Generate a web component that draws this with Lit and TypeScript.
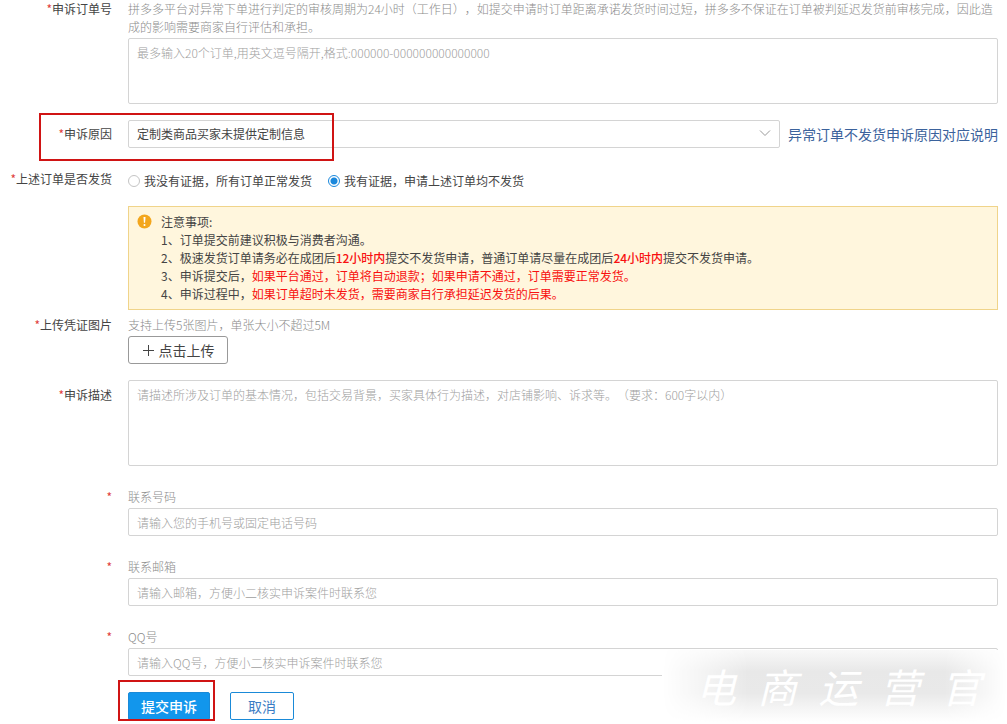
import { LitElement, html, css } from "lit";
import { customElement, state } from "lit/decorators.js";

interface ContactField {
  id: string;
  label: string;
  type: string;
  placeholder: string;
}

const CONTACTS: ContactField[] = [
  { id: "phone", label: "联系号码", type: "tel", placeholder: "请输入您的手机号或固定电话号码" },
  { id: "email", label: "联系邮箱", type: "email", placeholder: "请输入邮箱，方便小二核实申诉案件时联系您" },
  { id: "qq", label: "QQ号", type: "text", placeholder: "请输入QQ号，方便小二核实申诉案件时联系您" },
];

@customElement("app-root")
export class AppRoot extends LitElement {
  static styles = css`
    :host {
      display: block;
      position: relative;
      background: #fff;
      color: #444;
      font-family: "Noto Sans CJK SC", sans-serif;
      font-size: 12px;
      line-height: 18px;
      text-spacing-trim: space-all;
      overflow: hidden;
    }
    * {
      box-sizing: border-box;
    }
    input,
    textarea,
    select,
    button {
      font: inherit;
      color: inherit;
      margin: 0;
      text-spacing-trim: space-all;
    }
    .form {
      display: flex;
      flex-direction: column;
      padding: 0 9px 4px 0;
    }
    .row {
      position: relative;
      display: grid;
      grid-template-columns: 112px minmax(0, 1fr);
      column-gap: 16px;
      margin-bottom: 16px;
    }
    .label {
      text-align: right;
      white-space: nowrap;
    }
    .star {
      color: #e0403c;
    }
    .hint {
      margin: 0;
      color: #8c8c8c;
      font-weight: 300;
    }
    .orders .hint {
      margin-bottom: 2px;
    }
    .box {
      display: block;
      width: 100%;
      height: 28px;
      padding: 4px 8px;
      border: 1px solid #d4d4d4;
      border-radius: 2px;
      background: #fff;
      outline: none;
      resize: none;
    }
    .box::placeholder {
      color: #a0a0a0;
      opacity: 1;
      font-weight: 300;
    }
    .box:focus {
      border-color: #1890e8;
    }
    textarea.box {
      padding-top: 5px;
    }
    .order-box {
      height: 66px;
    }
    .desc-box {
      height: 86px;
    }
    .reason {
      align-items: center;
    }
    .reason-line {
      display: flex;
      align-items: center;
      gap: 8px;
    }
    .picker {
      position: relative;
      flex: 1;
      min-width: 0;
    }
    .picker select {
      appearance: none;
    }
    .chevron {
      position: absolute;
      right: 9px;
      top: 9px;
      pointer-events: none;
    }
    .link {
      color: #3b629c;
      font-size: 14px;
      text-decoration: none;
      white-space: nowrap;
    }
    .ring {
      position: absolute;
      border: 2px solid #d01414;
      pointer-events: none;
    }
    .ring-reason {
      left: 39px;
      top: -7px;
      width: 295px;
      height: 48px;
    }
    .ring-submit {
      left: -10px;
      top: -12px;
      width: 97px;
      height: 41px;
    }
    .shipping {
      padding-top: 6px;
    }
    .radios {
      display: flex;
      gap: 16px;
      padding-top: 2px;
    }
    .radio {
      display: flex;
      align-items: center;
      gap: 4px;
    }
    .radio input {
      appearance: none;
      width: 12px;
      height: 12px;
      border: 1px solid #c4c4c4;
      border-radius: 50%;
      background: #fff;
    }
    .radio input:checked {
      border-color: #1a88dc;
      background: radial-gradient(circle, #1a88dc 3px, #fff 4px);
    }
    .notice {
      display: flex;
      gap: 9px;
      margin-left: 128px;
      margin-bottom: 6px;
      padding: 6px 8px;
      border: 1px solid #f0d48a;
      background: #fff6dd;
    }
    .notice-icon {
      flex: none;
      margin-top: 1px;
    }
    .notice p {
      margin: 0;
    }
    .red {
      color: #f81010;
    }
    b.red {
      font-weight: 500;
    }
    .upload-btn {
      display: flex;
      align-items: center;
      justify-content: center;
      gap: 4px;
      width: 100px;
      height: 28px;
      margin-top: 2px;
      padding: 0;
      border: 1px solid #999;
      border-radius: 3px;
      background: #fff;
      font-size: 14px;
    }
    .desc .label {
      padding-top: 6px;
    }
    .contact {
      margin-top: 6px;
    }
    .contact .hint {
      display: block;
      margin-bottom: 2px;
    }
    .actions {
      position: relative;
      display: flex;
      gap: 20px;
      margin-left: 128px;
    }
    .btn {
      height: 28px;
      padding: 0;
      border: 1px solid #1a8ad8;
      border-radius: 2px;
      font-size: 14px;
    }
    .submit {
      width: 82px;
      background: #1296ec;
      color: #fff;
      font-weight: 500;
    }
    .cancel {
      width: 64px;
      background: #fff;
      color: #3b7dc4;
    }
    .watermark {
      position: absolute;
      right: 0;
      bottom: 2px;
      display: flex;
      align-items: center;
      justify-content: space-between;
      width: 345px;
      height: 72px;
      padding: 0 26px 0 34px;
      background: #fff;
      color: #fff;
      font-family: "Noto Sans CJK SC", cursive;
      font-size: 40px;
      font-style: italic;
      line-height: 72px;
      pointer-events: none;
      user-select: none;
    }
    .watermark::before {
      content: "";
      position: absolute;
      inset: 0;
      background: linear-gradient(to bottom, #f8f8f8, #e8e8e8 30%, #e9e9e9 60%, #fff);
      mask-image: linear-gradient(to right, transparent, #000 25%, #000 82%, transparent);
    }
    .watermark span {
      position: relative;
    }
  `;

  @state() private hasEvidence = true;

  private renderLabel(text: string, target: string) {
    return html`<label class="label" for=${target}><span class="star">*</span>${text}</label>`;
  }

  private renderContact(field: ContactField) {
    return html`
      <div class="row contact">
        <span class="label star">*</span>
        <div>
          <label class="hint" for=${field.id}>${field.label}</label>
          <input class="box" id=${field.id} type=${field.type} placeholder=${field.placeholder} />
        </div>
      </div>
    `;
  }

  render() {
    return html`
      <form class="form" @submit=${(e: Event) => e.preventDefault()}>
        <div class="row orders">
          ${this.renderLabel("申诉订单号", "orders")}
          <div>
            <p class="hint">拼多多平台对异常下单进行判定的审核周期为24小时（工作日），如提交申请时订单距离承诺发货时间过短，拼多多不保证在订单被判延迟发货前审核完成，因此造成的影响需要商家自行评估和承担。</p>
            <textarea class="box order-box" id="orders" placeholder="最多输入20个订单,用英文逗号隔开,格式:000000-000000000000000"></textarea>
          </div>
        </div>

        <div class="row reason">
          ${this.renderLabel("申诉原因", "reason")}
          <div class="reason-line">
            <div class="picker">
              <select class="box" id="reason">
                <option>定制类商品买家未提供定制信息</option>
              </select>
              <svg class="chevron" width="12" height="9" viewBox="0 0 12 9" fill="none" stroke="#999" aria-hidden="true">
                <path d="M1 1.5 6 6.5 11 1.5" />
              </svg>
            </div>
            <a class="link" href="#reasons">异常订单不发货申诉原因对应说明</a>
          </div>
          <span class="ring ring-reason"></span>
        </div>

        <div class="row shipping" role="radiogroup" aria-labelledby="shipping-label">
          <span class="label" id="shipping-label"><span class="star">*</span>上述订单是否发货</span>
          <div class="radios">
            <label class="radio">
              <input type="radio" name="evidence" .checked=${!this.hasEvidence} @change=${() => (this.hasEvidence = false)} />
              我没有证据，所有订单正常发货
            </label>
            <label class="radio">
              <input type="radio" name="evidence" .checked=${this.hasEvidence} @change=${() => (this.hasEvidence = true)} />
              我有证据，申请上述订单均不发货
            </label>
          </div>
        </div>

        <div class="notice">
          <svg class="notice-icon" width="15" height="15" viewBox="0 0 15 15" aria-hidden="true">
            <circle cx="7.5" cy="7.5" r="7" fill="#f3a61c" />
            <path d="M6.5 3h2L8.1 8.8H6.9Z" fill="#fff" />
            <circle cx="7.5" cy="10.9" r="1" fill="#fff" />
          </svg>
          <div>
            <p>注意事项:</p>
            <p>1、订单提交前建议积极与消费者沟通。</p>
            <p>2、极速发货订单请务必在成团后<b class="red">12小时内</b>提交不发货申请，普通订单请尽量在成团后<b class="red">24小时内</b>提交不发货申请。</p>
            <p>3、申诉提交后，<span class="red">如果平台通过，订单将自动退款；如果申请不通过，订单需要正常发货。</span></p>
            <p>4、申诉过程中，<span class="red">如果订单超时未发货，需要商家自行承担延迟发货的后果。</span></p>
          </div>
        </div>

        <div class="row">
          ${this.renderLabel("上传凭证图片", "upload")}
          <div>
            <p class="hint">支持上传5张图片，单张大小不超过5M</p>
            <button class="upload-btn" id="upload" type="button">
              <svg width="13" height="13" viewBox="0 0 13 13" stroke="#444" aria-hidden="true">
                <path d="M1 6.5H12M6.5 1V12" />
              </svg>
              点击上传
            </button>
          </div>
        </div>

        <div class="row desc">
          ${this.renderLabel("申诉描述", "desc")}
          <textarea class="box desc-box" id="desc" placeholder="请描述所涉及订单的基本情况，包括交易背景，买家具体行为描述，对店铺影响、诉求等。（要求：600字以内）"></textarea>
        </div>

        ${CONTACTS.map((field) => this.renderContact(field))}

        <div class="actions">
          <button class="btn submit" type="submit">提交申诉</button>
          <button class="btn cancel" type="button">取消</button>
          <span class="ring ring-submit"></span>
        </div>
      </form>
      <div class="watermark">${[..."电商运营官"].map((ch) => html`<span>${ch}</span>`)}</div>
    `;
  }
}
